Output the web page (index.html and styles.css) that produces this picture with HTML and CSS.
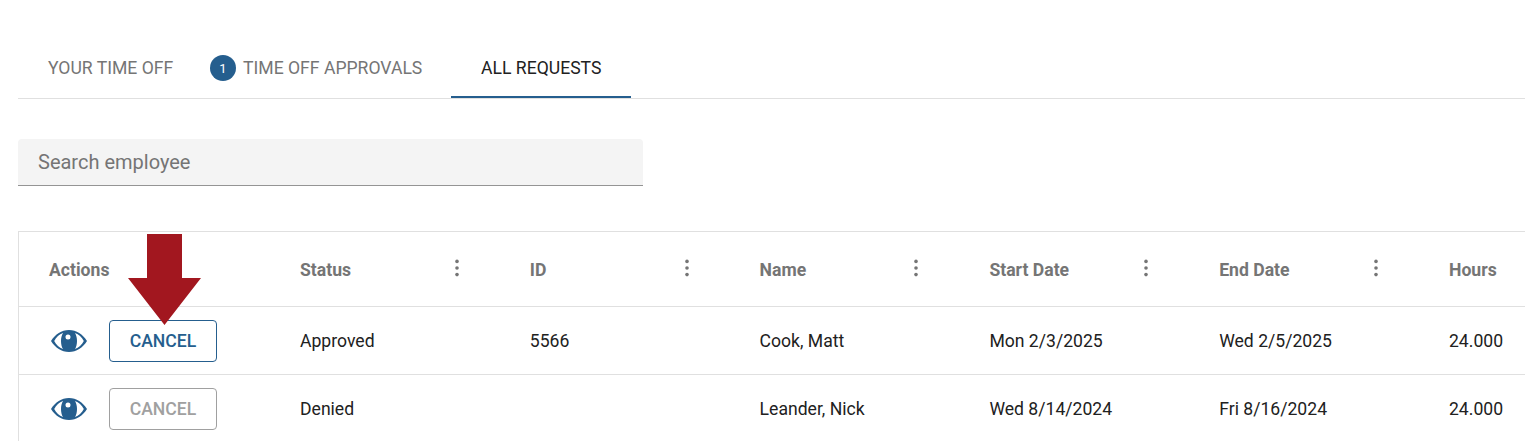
FILE: index.html
```html
<!DOCTYPE html>
<html lang="en">
  <head>
    <meta charset="UTF-8" />
    <meta name="viewport" content="width=device-width, initial-scale=1.0" />
    <title>Time Off</title>
    <link rel="stylesheet" href="styles.css">
  </head>
  <body>
    <div class="container">
      <!-- TABS -->
      <div class="tabs">
        <div class="tab tab-first">YOUR TIME OFF</div>
        <div class="tab tab-badge"><span class="badge">1</span>TIME OFF APPROVALS</div>
        <div class="tab tab-active">ALL REQUESTS</div>
      </div>

      <div class="search">Search employee</div>

      <!-- TABLE -->
      <div class="table">
        <div class="row row-head">
          <div class="cell cell-actions">Actions</div>
          <div class="cell">Status<svg class="kebab" viewBox="0 0 4 18"><circle cx="2" cy="2.400" r="1.800"/><circle cx="2" cy="9" r="1.800"/><circle cx="2" cy="15.600" r="1.800"/></svg></div>
          <div class="cell">ID<svg class="kebab" viewBox="0 0 4 18"><circle cx="2" cy="2.400" r="1.800"/><circle cx="2" cy="9" r="1.800"/><circle cx="2" cy="15.600" r="1.800"/></svg></div>
          <div class="cell">Name<svg class="kebab" viewBox="0 0 4 18"><circle cx="2" cy="2.400" r="1.800"/><circle cx="2" cy="9" r="1.800"/><circle cx="2" cy="15.600" r="1.800"/></svg></div>
          <div class="cell">Start Date<svg class="kebab" viewBox="0 0 4 18"><circle cx="2" cy="2.400" r="1.800"/><circle cx="2" cy="9" r="1.800"/><circle cx="2" cy="15.600" r="1.800"/></svg></div>
          <div class="cell">End Date<svg class="kebab" viewBox="0 0 4 18"><circle cx="2" cy="2.400" r="1.800"/><circle cx="2" cy="9" r="1.800"/><circle cx="2" cy="15.600" r="1.800"/></svg></div>
          <div class="cell">Hours</div>
        </div>

        <div class="row">
          <div class="cell cell-actions">
            <svg class="eye" viewBox="0 0 36 22"><path fill-rule="evenodd" d="M18 0C10.500 0 4.300 4.300 0 11c4.300 6.700 10.500 11 18 11s13.700-4.300 18-11C31.700 4.300 25.500 0 18 0zM12 2.900C8.200 4.200 5.300 7 3.200 11c2.100 4 5 6.800 8.800 8.100-1.300-2.100-2-4.900-2-8.100s.7-6 2-8.100zm12 0c1.300 2.100 2 4.900 2 8.100s-.7 6-2 8.100c3.800-1.300 6.700-4.100 8.800-8.100-2.100-4-5-6.800-8.800-8.100zM17 4.600a2.500 2.500 0 1 0 0 5 2.500 2.500 0 0 0 0-5z"/></svg>
            <button class="btn">CANCEL</button>
          </div>
          <div class="cell">Approved</div>
          <div class="cell">5566</div>
          <div class="cell">Cook, Matt</div>
          <div class="cell">Mon 2/3/2025</div>
          <div class="cell">Wed 2/5/2025</div>
          <div class="cell">24.000</div>
        </div>

        <div class="row">
          <div class="cell cell-actions">
            <svg class="eye" viewBox="0 0 36 22"><path fill-rule="evenodd" d="M18 0C10.500 0 4.300 4.300 0 11c4.300 6.700 10.500 11 18 11s13.700-4.300 18-11C31.700 4.300 25.500 0 18 0zM12 2.900C8.200 4.200 5.300 7 3.200 11c2.100 4 5 6.800 8.800 8.100-1.300-2.100-2-4.900-2-8.100s.7-6 2-8.100zm12 0c1.300 2.100 2 4.900 2 8.100s-.7 6-2 8.100c3.800-1.300 6.700-4.100 8.800-8.100-2.100-4-5-6.800-8.800-8.100zM17 4.600a2.500 2.500 0 1 0 0 5 2.500 2.500 0 0 0 0-5z"/></svg>
            <button class="btn btn-disabled">CANCEL</button>
          </div>
          <div class="cell">Denied</div>
          <div class="cell"></div>
          <div class="cell">Leander, Nick</div>
          <div class="cell">Wed 8/14/2024</div>
          <div class="cell">Fri 8/16/2024</div>
          <div class="cell">24.000</div>
        </div>

        <!-- flecha roja encima de la tabla -->
        <svg class="arrow" viewBox="0 0 73 91"><path d="M19 0h35v44h19L36.500 91 0 44h19z"/></svg>
      </div>
    </div>
  </body>
</html>
```

FILE: styles.css
```css
html,
body {
  margin: 0;
  height: 441px;
  overflow: hidden;
  background-color: white;
}

body {
  font-family: Roboto, "Liberation Sans", sans-serif;
  color: #212121;
}

.container {
  padding: 38px 0 0 18px;
}

.tabs {
  display: flex;
  height: 61px;
  box-sizing: border-box;
  border-bottom: 1px solid #e0e0e0;
}

.tab {
  display: flex;
  align-items: center;
  height: 60px;
  box-sizing: border-box;
  padding: 0 30px;
  font-size: 17.600px;
  color: #757575;
  white-space: nowrap;
}

.tab-first {
  width: 184px;
}

.tab-badge {
  padding: 0;
  margin: 0 0 0 8px;
  width: 241px;
}

.tab-active {
  width: 180px;
  color: #212121;
  border-bottom: 2px solid #255e8e;
  padding-top: 2px;
}

.badge {
  display: flex;
  align-items: center;
  justify-content: center;
  width: 26px;
  height: 26px;
  margin-right: 7px;
  border-radius: 50%;
  background-color: #255e8e;
  color: white;
  font-size: 13px;
}

.search {
  width: 625px;
  height: 47px;
  margin-top: 40px;
  padding-left: 20px;
  box-sizing: border-box;
  display: flex;
  align-items: center;
  background-color: #f4f4f4;
  border-bottom: 1px solid #949494;
  border-radius: 4px 4px 0 0;
  font-size: 20px;
  color: #757575;
}

.table {
  position: relative;
  margin-top: 45px;
  border-top: 1px solid #e0e0e0;
  border-left: 1px solid #e0e0e0;
  overflow: hidden;
}

.row {
  display: grid;
  grid-template-columns: 251px repeat(6, 229.800px);
  height: 68px;
  box-sizing: border-box;
  border-bottom: 1px solid #e0e0e0;
  font-size: 17.600px;
}

.row-head {
  height: 75px;
  font-weight: 700;
  color: #757575;
}

.cell {
  position: relative;
  display: flex;
  align-items: center;
  padding-left: 30px;
}

.row-head .cell {
  padding-top: 2px;
}

.cell-actions {
  gap: 22px;
}

.kebab {
  position: absolute;
  right: 41px;
  top: 27px;
  width: 4px;
  height: 18px;
  fill: #757575;
}

.eye {
  width: 36px;
  height: 22px;
  margin-left: 2px;
  fill: #255e8e;
}

.btn {
  width: 108px;
  height: 42px;
  background-color: white;
  border: 1px solid #255e8e;
  border-radius: 4px;
  color: #255e8e;
  font-family: inherit;
  font-size: 17.600px;
  font-weight: 500;
  padding: 0;
}

.btn-disabled {
  border-color: #a0a0a0;
  color: #a0a0a0;
}

.arrow {
  position: absolute;
  left: 109px;
  top: 2px;
  width: 73px;
  height: 91px;
  fill: #a2171f;
}
```
